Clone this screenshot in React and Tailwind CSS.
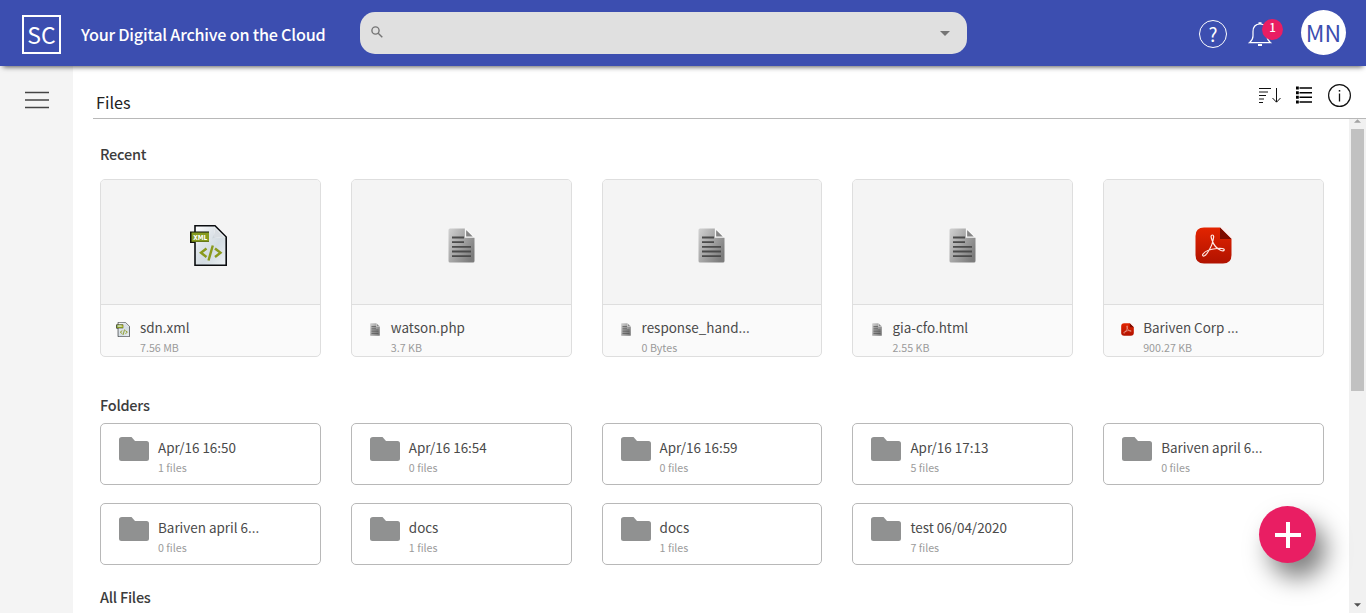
import React from "react";

const FONT = "font-['Noto_Sans_CJK_SC','Open_Sans',sans-serif]";

function XmlIcon({ className }) {
  return (
    <svg viewBox="0 0 37 41" className={className}>
      <defs>
        <linearGradient id="xmlPage" x1="0" y1="0" x2="1" y2="1">
          <stop offset="0" stopColor="#ffffff" />
          <stop offset="0.35" stopColor="#dfe5ea" />
          <stop offset="0.6" stopColor="#d3dce2" />
          <stop offset="1" stopColor="#eef2f4" />
        </linearGradient>
      </defs>
      <path d="M5 .8H25L36.2 12V40.2H5Z" fill="url(#xmlPage)" stroke="#0b0d10" strokeWidth="1.6" />
      <path d="M24 1.6V12.6H35.4Z" fill="#f6f8f9" />
      <path d="M24 2C25 7 24.500 10 22 13.500C27 12 31 12 35 13" fill="#c4ccd2" opacity=".6" />
      <path d="M0 6.500H19V17H5V18H0Z" fill="#111408" />
      <path d="M1.500 7.500H19V16.700H1.500Z" fill="#869b1f" />
      <text x="10.200" y="14.800" textAnchor="middle" textLength="14" lengthAdjust="spacingAndGlyphs" fontFamily="DejaVu Sans" fontWeight="700" fontSize="7" fill="#fff">XML</text>
      <path d="M16.500 23.500L11 27.800L16.500 32M25 23.500L30.500 27.800L25 32M22.800 20.500L18.500 35.500" fill="none" stroke="#8a9a1c" strokeWidth="2.400" />
    </svg>
  );
}

function DocIcon({ className }) {
  return (
    <svg viewBox="0 0 27 35" className={className}>
      <defs>
        <linearGradient id="docPage" x1="0" y1="0" x2="1" y2="0.700">
          <stop offset="0" stopColor="#d2d2d2" />
          <stop offset="1" stopColor="#7c7c7c" />
        </linearGradient>
      </defs>
      <path d="M2 .5H17L26.500 9.500V33Q26.500 34.500 25 34.500H2Q.5 34.500 .5 33V2Q.5 .5 2 .5Z" fill="url(#docPage)" />
      <path d="M17.500 .5V9.200H26.500Z" fill="#858585" stroke="#f7f7f7" strokeWidth="1.300" />
      <path d="M4 9.500H16M4 14.200H16M4 18.900H23M4 23.500H23M4 28.200H23" stroke="#4a4a4a" strokeWidth="1.800" />
    </svg>
  );
}

function PdfIcon({ className }) {
  return (
    <svg viewBox="0 0 37 37" className={className}>
      <defs>
        <linearGradient id="pdfBase" x1="0" y1="0" x2="0" y2="1">
          <stop offset="0" stopColor="#e32400" />
          <stop offset="1" stopColor="#b01200" />
        </linearGradient>
      </defs>
      <path d="M9 .5H25L36.500 12V28Q36.500 36.500 28 36.500H9Q.5 36.500 .5 28V9Q.5 .5 9 .5Z" fill="url(#pdfBase)" />
      <path d="M25 .5L36.500 12H25Z" fill="#7d0c00" />
      <path d="M26 .5C32 .5 36.500 5 36.500 11Z" fill="#fbeeee" />
      <path d="M17 13C15.500 9 16 8 17.300 8C19.500 8 18.500 11 18 13.500C17 19 12.500 27 9.500 28.800C8 29.500 7 28.500 8 27C10 24 17 22 22 21.500C26 21 29.500 21.500 29.200 23C28.500 25.500 23 22.500 20.500 19.500C18.500 17 17.700 15.500 17 13Z" fill="none" stroke="#ffe9e4" strokeWidth="1.200" />
    </svg>
  );
}

const KINDS = {
  xml: { Icon: XmlIcon, large: "w-[37px] h-[41px] mr-[3px]", small: "w-[14px] h-[15px] mr-[3px]" },
  doc: { Icon: DocIcon, large: "w-[27px] h-[35px]", small: "w-[10px] h-[13px]" },
  pdf: { Icon: PdfIcon, large: "w-[37px] h-[37px] mr-px", small: "w-[13px] h-[13px]" },
};

const RECENT = [
  { name: "sdn.xml", size: "7.56 MB", kind: "xml" },
  { name: "watson.php", size: "3.7 KB", kind: "doc" },
  { name: "response_hand...", size: "0 Bytes", kind: "doc" },
  { name: "gia-cfo.html", size: "2.55 KB", kind: "doc" },
  { name: "Bariven Corp ...", size: "900.27 KB", kind: "pdf" },
];

const FOLDERS = [
  ["Apr/16 16:50", 1],
  ["Apr/16 16:54", 0],
  ["Apr/16 16:59", 0],
  ["Apr/16 17:13", 5],
  ["Bariven april 6...", 0],
  ["Bariven april 6...", 0],
  ["docs", 1],
  ["docs", 1],
  ["test 06/04/2020", 7],
];

function RecentCard({ name, size, kind }) {
  const { Icon, large, small } = KINDS[kind];
  return (
    <div className="h-[178px] overflow-hidden rounded-[5px] border border-[#dedede] bg-[#fafafa]">
      <div className="flex h-[125px] items-center justify-center border-b border-[#dedede] bg-[#f4f4f4] pt-[7px]">
        <Icon className={large} />
      </div>
      <div className="flex pt-[13px] pl-[15px]">
        <div className="mt-px flex h-[21px] w-[17px] items-center justify-center">
          <Icon className={small} />
        </div>
        <div className="ml-[7px]">
          <div className="h-5 text-[13.45px] leading-[19px] text-[#4a4a4a]">{name}</div>
          <div className="text-[10.7px] leading-5 text-[#9b9b9b]">{size}</div>
        </div>
      </div>
    </div>
  );
}

function FolderCard({ name, count }) {
  return (
    <div className="flex h-[62px] rounded-[5px] border border-[#b8b8b8] bg-white pt-[13px] pl-[18px]">
      <svg viewBox="0 0 30 24" className="h-6 w-[30px]">
        <path d="M3 0H12.500L16 4H27.500Q30 4 30 6.500V21.500Q30 24 27.500 24H2.500Q0 24 0 21.500V2.500Q0 0 3 0Z" fill="#909191" />
      </svg>
      <div className="ml-[9px] pt-px">
        <div className="h-5 text-[13.45px] leading-[19px] text-[#4a4a4a]">{name}</div>
        <div className="text-[10.7px] leading-5 text-[#9b9b9b]">{count} files</div>
      </div>
    </div>
  );
}

export default function App() {
  return (
    <div className={`flex h-[613px] w-[1366px] flex-col overflow-hidden bg-white ${FONT}`}>
      <header className="relative z-10 flex h-[66px] shrink-0 items-center bg-[#3c4eb0] shadow-[0_4px_5px_-3px_rgba(0,0,0,0.65)]">
        <div className="mt-[3px] ml-[22px] flex h-[39px] w-[39px] items-center justify-center border-2 border-white text-[23px] leading-none text-white">SC</div>
        <div className="ml-5 w-[279px] pt-[2px] text-[16.2px] leading-6 font-medium tracking-[-0.22px] whitespace-nowrap text-white">Your Digital Archive on the Cloud</div>
        <div className="flex h-[42px] w-[607px] items-center justify-between rounded-[15px] bg-[#e0e0e0] pr-[17px] pl-[11px]">
          <svg viewBox="0 0 12 12" className="mb-[3px] h-3 w-3" fill="none" stroke="#757575" strokeWidth="1.400">
            <circle cx="4.500" cy="4.500" r="3.600" />
            <path d="M7.200 7.200L11.300 11.300" />
          </svg>
          <svg viewBox="0 0 10 5" className="h-[5px] w-[10px]"><path d="M0 0H10L5 5Z" fill="#757575" /></svg>
        </div>
        <div className="mt-[2px] ml-[232px] flex h-7 w-7 items-center justify-center rounded-full border-[1.5px] border-white pb-px text-[19px] leading-none text-white">?</div>
        <div className="relative mt-[2px] ml-[21px] h-6 w-8">
          <svg viewBox="0 0 24 25" className="h-[25px] w-6" fill="none" stroke="#fff" strokeWidth="1.200">
            <path d="M12 2C7.500 2 5 5 5 9.500V14C5 17 3.500 19 1.500 20.600H22.500C20.500 19 19 17 19 14V9.500C19 5 16.500 2 12 2Z" />
            <path d="M10.500 1.200H13.500M10 23H14" strokeWidth="1.800" />
          </svg>
          <div className="absolute -top-[3px] left-[14px] flex h-[21px] w-[21px] items-center justify-center rounded-full bg-[#e91e63] pb-[3px] text-[11.500px] leading-none font-medium text-white">1</div>
        </div>
        <div className="-mt-px ml-[21px] flex h-[45px] w-[45px] shrink-0 items-center justify-center rounded-full bg-white text-[23px] leading-none text-[#3c4eb0]">MN</div>
      </header>

      <div className="flex min-h-0 flex-1">
        <aside className="w-[73px] shrink-0 bg-[#f4f4f4] pt-[25px] pl-[25px]">
          <svg viewBox="0 0 24 18" className="h-[18px] w-6">
            <path d="M0 1.500H24M0 9H24M0 16.500H24" stroke="#444" strokeWidth="1.300" />
          </svg>
        </aside>

        <main className="ml-5 flex min-w-0 flex-1 flex-col">
          <div className="flex h-[53px] shrink-0 justify-between border-b border-[#b8b8b8]">
            <h1 className="pt-[24px] pl-[3px] text-[16.200px] leading-6 text-[#222]">Files</h1>
            <div className="flex pt-[18px] pr-[15px]">
              <svg viewBox="0 0 23 18" className="mt-[2px] h-[18px] w-[23px]" fill="none" stroke="#111">
                <path d="M1 2.500H13M1 9.500H8M1 16.500H5" />
                <path d="M1 6H10M1 13H6" stroke="#666" strokeWidth="1.600" />
                <path d="M18.500 2V16M14.500 12L18.500 16.200L22.500 12" />
              </svg>
              <svg viewBox="0 0 16 18" className="mt-[2px] ml-[15px] h-[18px] w-4" stroke="#000">
                <path d="M0 2H2.800M0 6.700H2.800M0 11.300H2.800M0 16H2.800" strokeWidth="3" />
                <path d="M3.500 2H16M3.500 6.700H16M3.500 11.300H16M3.500 16H16" strokeWidth="1.600" />
              </svg>
              <svg viewBox="0 0 23 23" className="ml-4 h-[23px] w-[23px]" fill="none" stroke="#111">
                <circle cx="11.500" cy="11.500" r="10.900" strokeWidth="1.200" />
                <path d="M11.500 9.500V17.500" strokeWidth="1.300" />
                <path d="M11.500 6V7.600" strokeWidth="1.500" />
              </svg>
            </div>
          </div>

          <div className="flex min-h-0 flex-1">
            <div className="min-w-0 flex-1 overflow-hidden pl-[7px]">
              <h2 className="mt-[24px] h-[36px] text-[14.5px] leading-[22px] font-medium tracking-[-0.25px] text-[#3c3c3c]">Recent</h2>
              <div className="grid w-[1224px] grid-cols-5 gap-x-[30px]">
                {RECENT.map((file) => <RecentCard key={file.name} {...file} />)}
              </div>
              <h2 className="mt-[37px] h-[29px] text-[14.5px] leading-[22px] font-medium tracking-[-0.25px] text-[#3c3c3c]">Folders</h2>
              <div className="grid w-[1224px] grid-cols-5 gap-x-[30px] gap-y-[18px]">
                {FOLDERS.map(([name, count], i) => <FolderCard key={i} name={name} count={count} />)}
              </div>
              <h2 className="mt-[21px] text-[14.5px] leading-[22px] font-medium tracking-[-0.25px] text-[#3c3c3c]">All Files</h2>
            </div>
            <div className="flex w-[17px] shrink-0 flex-col items-center bg-[#f1f1f1]">
              <svg viewBox="0 0 8 4" className="h-[4px] w-[7px] shrink-0"><path d="M0 4H8L4 0Z" fill="#a3a3a3" /></svg>
              <div className="mt-[6px] h-[262px] w-[13px] bg-[#c1c1c1]" />
              <svg viewBox="0 0 8 4" className="mt-auto mb-[6px] h-[4px] w-[7px] shrink-0"><path d="M0 0H8L4 4Z" fill="#505050" /></svg>
            </div>
          </div>
        </main>
      </div>

      <button className="absolute top-[506px] left-[1259px] flex h-[57px] w-[57px] items-center justify-center rounded-full bg-[#e91e63] shadow-[10px_15px_24px_rgba(0,0,0,0.5)]">
        <svg viewBox="0 0 26 26" className="mt-px ml-px h-[26px] w-[26px]"><path d="M13 0V26M0 13H26" stroke="#fff" strokeWidth="4" /></svg>
      </button>
    </div>
  );
}
